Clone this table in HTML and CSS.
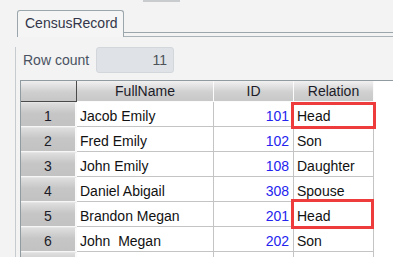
FILE: index.html
```html
<!DOCTYPE html>
<html>
<head>
<meta charset="utf-8">
<link rel="stylesheet" href="styles.css">
</head>
<body>
<div class="top-stub"></div>
<div class="tabstrip">
  <div class="tab">CensusRecord</div>
  <div class="tab-fill"></div>
</div>
<div class="panel">
  <div class="count-row">
    <span class="count-label">Row count</span>
    <div class="count-field">11</div>
  </div>
  <div class="grid">
    <div class="row head">
      <div class="corner"></div>
      <div class="hc c-name">FullName</div>
      <div class="hc c-id">ID</div>
      <div class="hc c-rel">Relation</div>
    </div>
    <div class="row">
      <div class="rh">1</div>
      <div class="dc c-name">Jacob Emily</div>
      <div class="dc c-id num">101</div>
      <div class="dc c-rel">Head</div>
    </div>
    <div class="row">
      <div class="rh">2</div>
      <div class="dc c-name">Fred Emily</div>
      <div class="dc c-id num">102</div>
      <div class="dc c-rel">Son</div>
    </div>
    <div class="row">
      <div class="rh">3</div>
      <div class="dc c-name">John Emily</div>
      <div class="dc c-id num">108</div>
      <div class="dc c-rel">Daughter</div>
    </div>
    <div class="row">
      <div class="rh">4</div>
      <div class="dc c-name">Daniel Abigail</div>
      <div class="dc c-id num">308</div>
      <div class="dc c-rel">Spouse</div>
    </div>
    <div class="row">
      <div class="rh">5</div>
      <div class="dc c-name">Brandon Megan</div>
      <div class="dc c-id num">201</div>
      <div class="dc c-rel">Head</div>
    </div>
    <div class="row">
      <div class="rh">6</div>
      <div class="dc c-name">John&nbsp; Megan</div>
      <div class="dc c-id num">202</div>
      <div class="dc c-rel">Son</div>
    </div>
    <div class="row">
      <div class="rh"></div>
      <div class="dc c-name"></div>
      <div class="dc c-id num"></div>
      <div class="dc c-rel"></div>
    </div>
    <div class="mark mark-1"></div>
    <div class="mark mark-5"></div>
  </div>
</div>
</body>
</html>
```
FILE: styles.css
```css
html, body {
  margin: 0;
  padding: 0;
}
body {
  width: 393px;
  height: 257px;
  overflow: hidden;
  background: #f2f3f2;
  font-family: "Liberation Sans", Arial, sans-serif;
  font-size: 14px;
  color: #111;
}
.top-stub {
  margin-left: 143px;
  width: 37px;
  height: 2px;
  background: #c9cccf;
}
.tabstrip {
  display: flex;
  margin-top: 8px;
  height: 27px;
}
.tab {
  margin-left: 17px;
  width: 107px;
  box-sizing: border-box;
  border: 1px solid #9ba6ac;
  border-bottom: none;
  border-radius: 3px 3px 0 0;
  padding: 2px 0 0 7px;
  line-height: 20px;
  color: #33364a;
  background: #f4f5f4;
}
.tab-fill {
  flex: 1;
  align-self: flex-end;
  height: 5px;
  box-sizing: border-box;
  border-top: 1px solid #9ba6ac;
  border-bottom: 1px solid #aab3b8;
}
.panel {
  margin-left: 15px;
  border-left: 1px solid #c5cbce;
  height: 220px;
}
.count-row {
  display: flex;
  align-items: center;
  margin-top: 10px;
  padding-left: 7px;
  gap: 7px;
}
.count-label {
  color: #4a5262;
}
.count-field {
  width: 78px;
  height: 26px;
  box-sizing: border-box;
  border: 1px solid #d3d7dc;
  border-radius: 3px;
  background: #dfe2e7;
  text-align: right;
  padding-right: 6px;
  line-height: 24px;
  color: #4d5258;
}
.grid {
  position: relative;
  margin-top: 7px;
  margin-left: 4px;
  border-top: 1px solid #8f9ba1;
  border-left: 1px solid #8f9ba1;
  background: #fff;
  height: 176px;
  overflow: hidden;
}
.row {
  display: flex;
  height: 25px;
}
.row.head {
  height: 21px;
}
.corner, .hc, .rh, .dc {
  box-sizing: border-box;
  height: 100%;
  white-space: pre;
}
.corner {
  width: 56px;
  border-right: 1px solid #4a4a4a;
  border-bottom: 1px solid #4a4a4a;
  background: linear-gradient(#eeeeee, #cfcfcf 55%, #c6c6c6);
}
.hc {
  border-right: 1px solid #fbfbfb;
  border-bottom: 1px solid #fbfbfb;
  background: linear-gradient(#f1f1f1, #d0d0d0 55%, #c8c8c8);
  text-align: center;
  padding-top: 1px;
  line-height: 19px;
  color: #1c1c28;
}
.rh {
  width: 56px;
  border-right: 2px solid #fafafa;
  border-bottom: 1px solid #f6f6f6;
  border-top: 1px solid #e6e6e6;
  background: linear-gradient(#dedede, #c6c6c6 45%, #c2c2c2);
  text-align: center;
  padding-top: 2px;
  line-height: 22px;
  color: #1c1c28;
}
.dc {
  border-right: 1px solid #c4c4c4;
  border-bottom: 1px solid #c4c4c4;
  padding: 3px 3px 0 3px;
  line-height: 22px;
  color: #111;
}
.c-name { width: 137px; }
.c-id { width: 80px; }
.c-rel { width: 80px; }
.num {
  text-align: right;
  padding-right: 4px;
  color: #2424ee;
}
.mark {
  position: absolute;
  box-sizing: border-box;
  border: 3px solid #ee3b3b;
}
.mark-1 {
  left: 270px;
  top: 21px;
  width: 85px;
  height: 27px;
}
.mark-5 {
  left: 270px;
  top: 118px;
  width: 83px;
  height: 30px;
}
```
